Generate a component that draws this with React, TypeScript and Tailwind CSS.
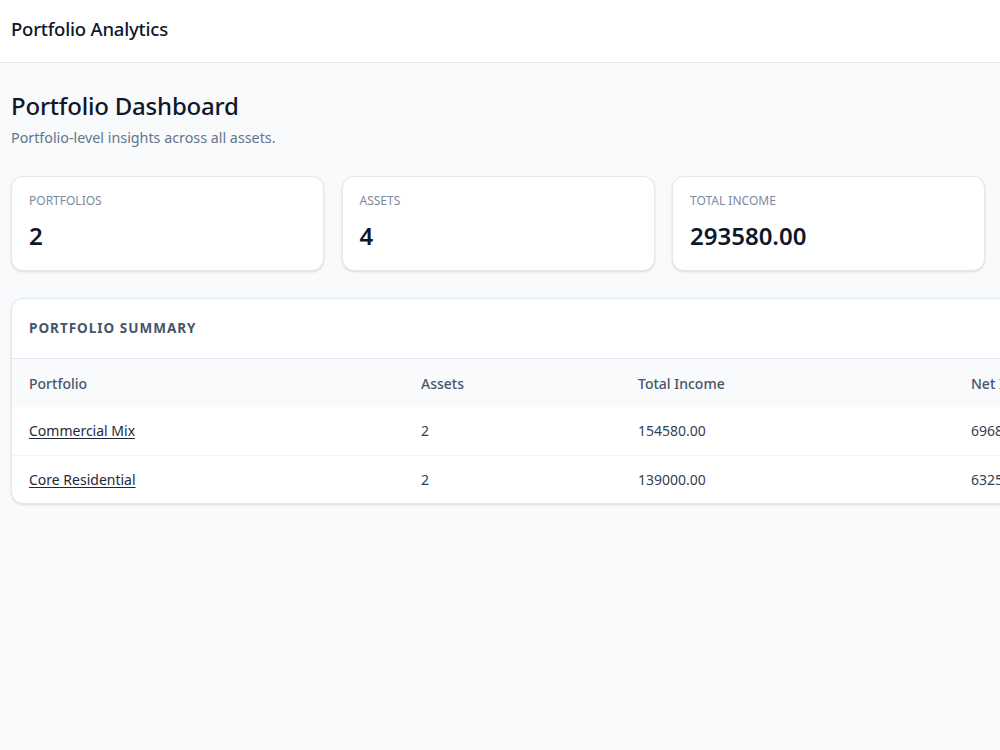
import React from "react";

const stats = [
  { label: "Portfolios", value: "2" },
  { label: "Assets", value: "4" },
  { label: "Total Income", value: "293580.00" },
  { label: "Net Income", value: "132930.00" },
];

const rows = [
  { name: "Commercial Mix", assets: "2", income: "154580.00", net: "69680.00" },
  { name: "Core Residential", assets: "2", income: "139000.00", net: "63250.00" },
];

export default function App() {
  return (
    <div
      className="min-h-screen bg-[#f8fafc] text-[#0f172a] overflow-hidden"
      style={{ fontFamily: '"Noto Sans", "Open Sans", sans-serif' }}
    >
      <header className="h-[63px] bg-white border-b border-[#e2e8f0] px-[11px] pb-[5px] flex items-center">
        <h1 className="text-[18.5px] font-medium tracking-[-0.2px]">Portfolio Analytics</h1>
      </header>
      <main className="px-[11px] pt-[28px] w-[1330px]">
        <h2 className="text-[24px] leading-[30px] font-medium tracking-[-0.2px]">Portfolio Dashboard</h2>
        <p className="mt-[7px] text-[14.3px] leading-[20px] text-[#64748b]">
          Portfolio-level insights across all assets.
        </p>
        <div className="mt-[28px] grid grid-cols-[repeat(4,313px)] gap-[17.5px]">
          {stats.map((s) => (
            <div
              key={s.label}
              className="h-[95px] rounded-xl border border-[#e2e8f0] bg-white shadow-sm px-[17px] pt-[16px]"
            >
              <div className="text-[12px] leading-[16px] uppercase text-[#7b8aa0]">{s.label}</div>
              <div className="mt-[12px] text-[24px] leading-[30px] font-semibold">{s.value}</div>
            </div>
          ))}
        </div>
        <div className="mt-[27px] w-[1306px] rounded-xl border border-[#e2e8f0] bg-white shadow-sm overflow-hidden">
          <div className="h-[60px] px-[17px] pb-[1px] flex items-center border-b border-[#e2e8f0]">
            <h3 className="text-[13.5px] font-bold uppercase tracking-[1px] text-[#475569]">
              Portfolio Summary
            </h3>
          </div>
          <table className="w-full text-[14px] border-collapse">
            <thead>
              <tr className="h-[48px] bg-[#f8fafc] text-left text-[#475569]">
                <th className="w-[409px] px-[17px] font-medium">Portfolio</th>
                <th className="w-[217px] px-0 font-medium">Assets</th>
                <th className="w-[333px] px-0 font-medium">Total Income</th>
                <th className="px-0 font-medium">Net Income</th>
              </tr>
            </thead>
            <tbody className="text-[#334155]">
              {rows.map((r, i) => (
                <tr
                  key={r.name}
                  className={i > 0 ? "h-[48px] border-t border-[#f1f5f9]" : "h-[48px]"}
                >
                  <td className="px-[17px]">
                    <a href="#" className="underline underline-offset-2 text-[#1e293b]">
                      {r.name}
                    </a>
                  </td>
                  <td>{r.assets}</td>
                  <td>{r.income}</td>
                  <td>{r.net}</td>
                </tr>
              ))}
            </tbody>
          </table>
        </div>
      </main>
    </div>
  );
}
